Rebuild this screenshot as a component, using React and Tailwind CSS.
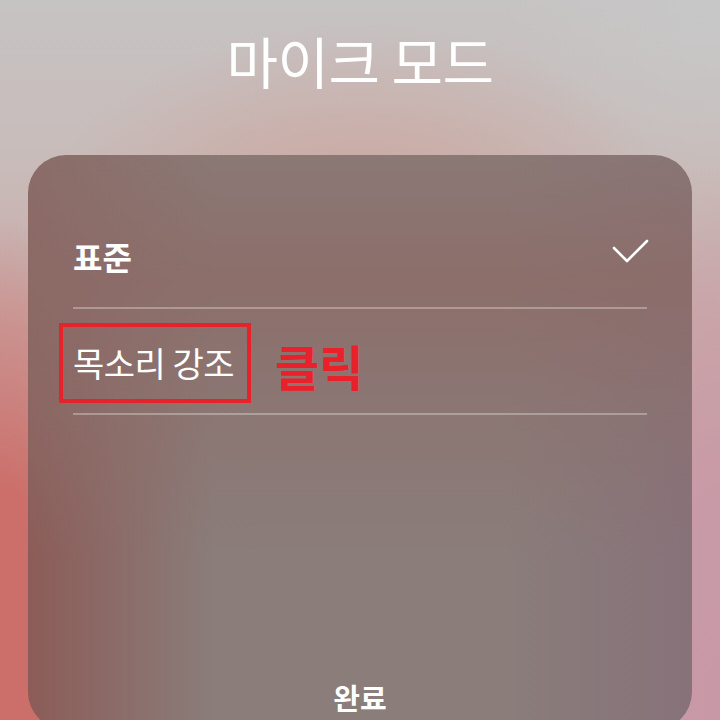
import React from "react";

export default function App() {
  return (
    <div
      className="w-[720px] h-[720px] overflow-hidden flex flex-col items-center bg-[linear-gradient(180deg,#c6c3c3_0%,#c8bcba_22%,#c9aaa8_45%,#c8a4a6_100%)]"
      style={{ fontFamily: '"Noto Sans CJK KR", "Noto Sans", sans-serif' }}
    >
      <div className="w-full h-full flex flex-col items-center bg-[radial-gradient(ellipse_45%_30%_at_50%_33%,rgba(204,160,152,0.9),rgba(204,160,152,0)),radial-gradient(ellipse_24%_70%_at_0%_100%,rgba(204,110,105,1)_0%,rgba(204,110,105,1)_45%,rgba(204,110,105,0)_100%),radial-gradient(ellipse_20%_75%_at_100%_100%,rgba(200,152,166,1)_0%,rgba(200,152,166,0.9)_40%,rgba(200,152,166,0)_100%),radial-gradient(ellipse_30%_25%_at_100%_0%,rgba(200,200,200,0.9),rgba(200,200,200,0))]">
        <div className="mt-[28px] h-[64px] leading-[64px] text-[56px] text-white font-normal tracking-[-0.5px]">
          마이크 모드
        </div>
        <div className="mt-[63px] w-[664px] h-[575px] shrink-0 rounded-[38px] flex flex-col px-[45px] pt-[48px] bg-[#8a7d7a] bg-[linear-gradient(180deg,rgba(138,118,114,0.6)_0%,rgba(140,108,104,0.85)_22%,rgba(140,112,108,0.5)_45%,rgba(138,126,122,0)_70%),linear-gradient(90deg,rgba(140,88,84,0.9)_0%,rgba(138,118,110,0)_28%,rgba(138,125,122,0)_72%,rgba(134,110,122,0.75)_100%)]">
          <div className="h-[106px] flex items-center justify-between border-b-2 border-white/30">
            <span className="text-[32px] leading-[32px] font-bold text-white mt-[2px]">표준</span>
            <svg width="40" height="30" viewBox="0 0 40 30" className="mr-[-2px] mt-[-4px]">
              <polyline
                points="5,10 18,23 38,3"
                fill="none"
                stroke="white"
                strokeWidth="2.6"
                strokeLinecap="round"
                strokeLinejoin="round"
              />
            </svg>
          </div>
          <div className="h-[106px] flex items-center border-b-2 border-white/30">
            <div className="ml-[-14px] mt-[4px] h-[80px] border-4 border-[#e6232b] pl-[10px] pr-[13px] flex items-center">
              <span className="text-[34px] leading-[34px] text-white whitespace-nowrap tracking-[-0.5px]">목소리 강조</span>
            </div>
            <span className="ml-[24px] mt-[8px] text-[48px] leading-[48px] font-bold text-[#e8212a]">클릭</span>
          </div>
          <div className="flex-1" />
          <div className="pb-[18px] text-center text-[29px] leading-[30px] font-bold text-white">완료</div>
        </div>
      </div>
    </div>
  );
}
